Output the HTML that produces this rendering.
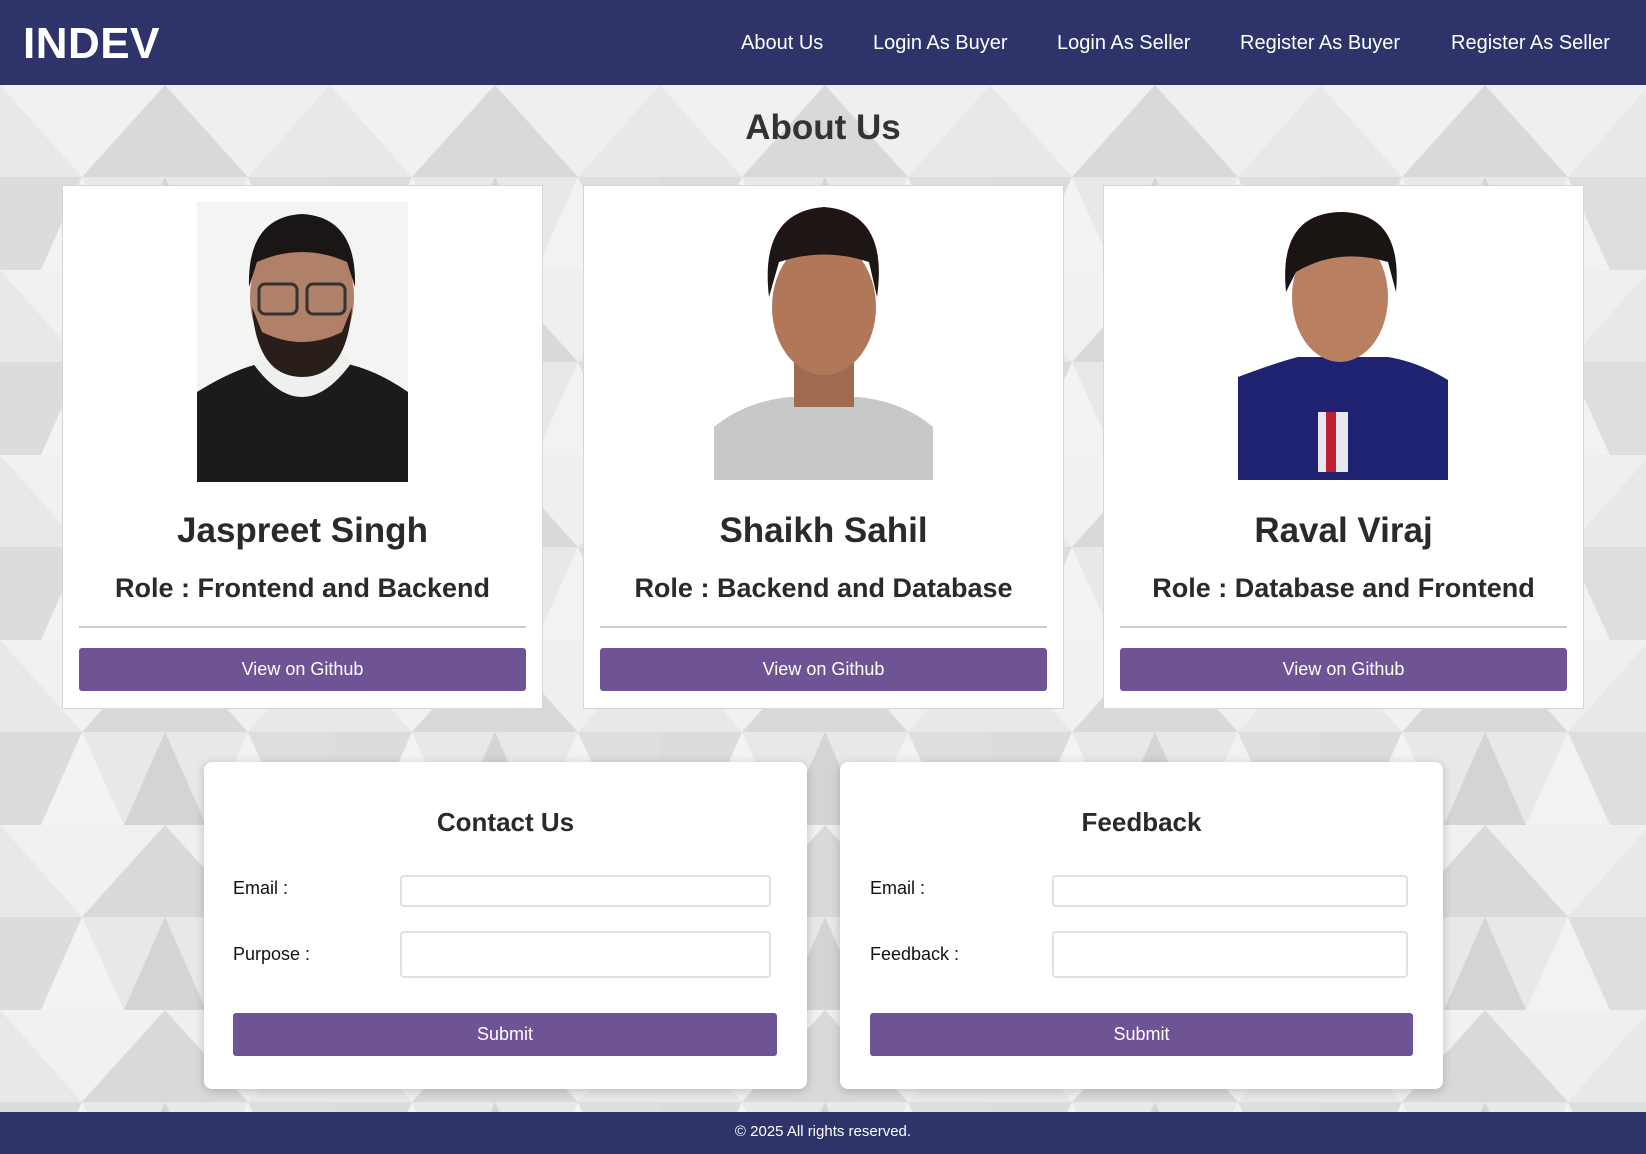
<!DOCTYPE html>
<html><head><meta charset="utf-8"><style>
*{box-sizing:border-box;margin:0;padding:0}
body{width:1646px;height:1154px;position:relative;overflow:hidden;font-family:"Liberation Sans",Arial,sans-serif;background:#e4e4e4}
.bg{position:absolute;left:0;top:85px;width:1646px;height:1027px}
header{position:absolute;left:0;top:0;width:1646px;height:85px;background:#2e3369;color:#fff}
.logo{position:absolute;left:23px;top:19px;font-size:44px;font-weight:bold;letter-spacing:0.5px}
.nav a{position:absolute;top:32px;font-size:20px;color:#fff;text-decoration:none;white-space:nowrap}
h1{position:absolute;left:0;width:1646px;top:108px;text-align:center;font-size:35px;color:#333;font-weight:bold}
.card{position:absolute;top:185px;width:481px;height:524px;background:#fff;border:1px solid #d6d6d6}
.card svg{position:absolute;top:16px}
.card .nm{position:absolute;top:325px;width:100%;text-align:center;font-size:35px;font-weight:bold;color:#2a2a2a}
.card .rl{position:absolute;top:387px;width:100%;text-align:center;font-size:27px;font-weight:bold;color:#2a2a2a}
.card .hr{position:absolute;top:440px;left:16px;right:16px;height:2px;background:#ccc}
.btn{position:absolute;background:#6f5495;color:#fff;text-align:center;border-radius:3px;font-size:18px}
.card .btn{top:462px;left:16px;right:16px;height:43px;line-height:43px}
.form{position:absolute;top:762px;width:603px;height:327px;background:#fff;border-radius:8px;box-shadow:0 2px 10px rgba(0,0,0,.2)}
.form h2{position:absolute;top:45px;width:100%;text-align:center;font-size:26px;color:#2a2a2a}
.lab{position:absolute;font-size:18px;color:#111}
.inp{position:absolute;border:2px solid #e0e0e0;border-radius:4px;background:#fff}
.form .btn{top:251px;height:43px;line-height:43px}
footer{position:absolute;left:0;top:1112px;width:1646px;height:42px;background:#2e3369;color:#fff;text-align:center;font-size:15px;line-height:40px}
</style></head><body>
<svg class="bg" viewBox="0 0 1646 1027" preserveAspectRatio="none">
<defs><pattern id="p" width="330" height="185" patternUnits="userSpaceOnUse">
<rect width="330" height="185" fill="#e8e8e8"/>
<polygon points="0,0 82,92 165,0" fill="#f1f1f1"/>
<polygon points="82,92 165,0 248,92" fill="#d9d9d9"/>
<polygon points="165,0 248,92 330,0" fill="#efefef"/>
<polygon points="0,92 82,92 41,185 0,185" fill="#dcdcdc"/>
<polygon points="82,92 41,185 124,185" fill="#f3f3f3"/>
<polygon points="165,92 124,185 206,185" fill="#d4d4d4"/>
<polygon points="248,92 206,185 290,185" fill="#f2f2f2"/>
<polygon points="248,92 330,92 330,185 290,185" fill="#dedede"/>
</pattern></defs>
<rect width="1646" height="1027" fill="url(#p)"/>
</svg>
<header><div class="logo">INDEV</div>
<div class="nav"><a style="left:741px">About Us</a><a style="left:873px">Login As Buyer</a><a style="left:1057px">Login As Seller</a><a style="left:1240px">Register As Buyer</a><a style="left:1451px">Register As Seller</a></div></header>
<h1>About Us</h1>

<div class="card" style="left:62px">
<svg style="left:134px" width="211" height="280" viewBox="0 0 211 280"><rect width="211" height="280" fill="#f4f4f2"/><path d="M0 190 Q40 165 70 160 L140 160 Q175 165 211 190 L211 280 L0 280Z" fill="#1c1a1c"/><path d="M55 160 Q105 230 155 160 L140 145 L70 145Z" fill="#eef0ee"/><ellipse cx="105" cy="95" rx="52" ry="70" fill="#b08068"/><path d="M52 85 Q50 15 105 12 Q160 15 158 85 L150 60 Q105 40 60 60Z" fill="#1a1616"/><path d="M55 105 Q60 175 105 175 Q150 175 155 105 L145 130 Q105 150 65 130Z" fill="#2a1e1a"/><rect x="62" y="82" width="38" height="30" rx="6" fill="none" stroke="#333" stroke-width="3"/><rect x="110" y="82" width="38" height="30" rx="6" fill="none" stroke="#333" stroke-width="3"/></svg>
<div class="nm">Jaspreet Singh</div><div class="rl">Role : Frontend and Backend</div><div class="hr"></div><div class="btn">View on Github</div></div>

<div class="card" style="left:583px">
<svg style="left:130px" width="219" height="278" viewBox="0 0 219 278"><rect width="219" height="278" fill="#fff"/><path d="M0 225 Q30 200 75 195 L145 195 Q190 200 219 225 L219 278 L0 278Z" fill="#c8c8c8"/><rect x="80" y="150" width="60" height="55" fill="#a06a50"/><ellipse cx="110" cy="105" rx="52" ry="68" fill="#b07858"/><path d="M55 95 Q45 10 110 5 Q175 10 163 95 L155 60 Q110 45 65 60Z" fill="#1e1614"/></svg>
<div class="nm">Shaikh Sahil</div><div class="rl">Role : Backend and Database</div><div class="hr"></div><div class="btn">View on Github</div></div>

<div class="card" style="left:1103px">
<svg style="left:134px" width="210" height="278" viewBox="0 0 210 278"><rect width="210" height="278" fill="#fff"/><path d="M0 175 Q40 160 60 155 L150 155 Q180 160 210 178 L210 278 L0 278Z" fill="#1e2270"/><rect x="80" y="210" width="30" height="60" fill="#e8e8f0"/><rect x="88" y="210" width="10" height="60" fill="#c02030"/><ellipse cx="102" cy="95" rx="48" ry="65" fill="#b88060"/><path d="M48 90 Q40 10 105 10 Q165 12 158 90 L150 60 Q100 45 58 70Z" fill="#1a1412"/></svg>
<div class="nm">Raval Viraj</div><div class="rl">Role : Database and Frontend</div><div class="hr"></div><div class="btn">View on Github</div></div>

<div class="form" style="left:204px"><h2>Contact Us</h2>
<div class="lab" style="left:29px;top:116px">Email :</div><div class="inp" style="left:196px;top:113px;width:371px;height:32px"></div>
<div class="lab" style="left:29px;top:182px">Purpose :</div><div class="inp" style="left:196px;top:169px;width:371px;height:47px"></div>
<div class="btn" style="left:29px;width:544px">Submit</div></div>

<div class="form" style="left:840px"><h2>Feedback</h2>
<div class="lab" style="left:30px;top:116px">Email :</div><div class="inp" style="left:212px;top:113px;width:356px;height:32px"></div>
<div class="lab" style="left:30px;top:182px">Feedback :</div><div class="inp" style="left:212px;top:169px;width:356px;height:47px"></div>
<div class="btn" style="left:30px;width:543px">Submit</div></div>

<footer>© 2025 All rights reserved.</footer>
</body></html>
